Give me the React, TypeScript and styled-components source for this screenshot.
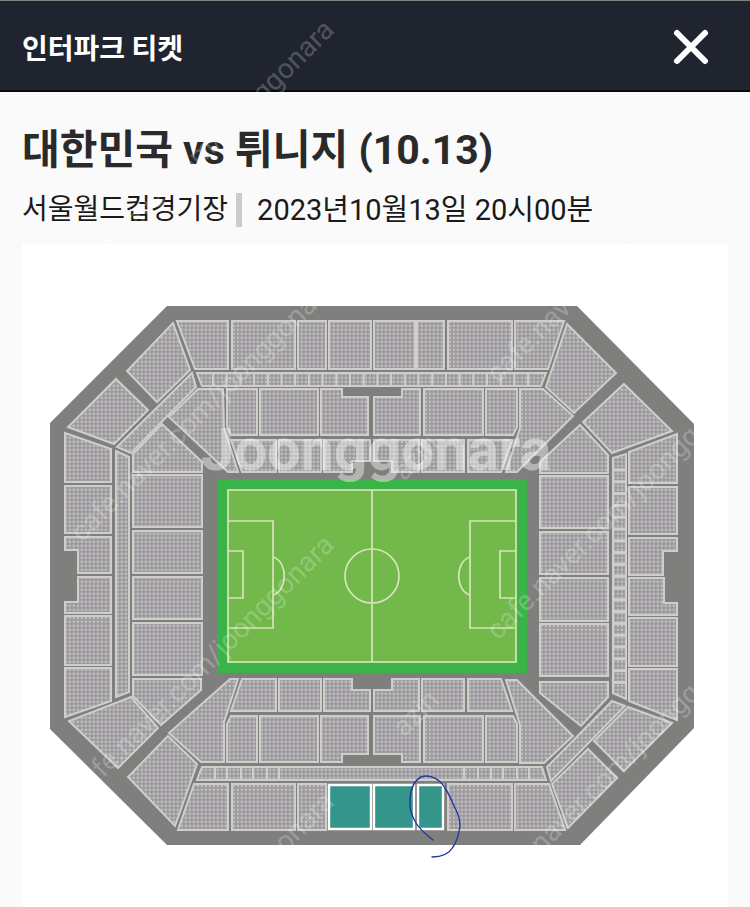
import React from 'react';
import styled, { createGlobalStyle } from 'styled-components';

const GlobalStyle = createGlobalStyle`
  * { box-sizing: border-box; }
  body {
    margin: 0;
    background: #fafafa;
    color: #222;
    font-family: Roboto, "Noto Sans CJK KR", sans-serif;
  }
`;

const Page = styled.div`
  position: relative;
  overflow: hidden;
`;

const Header = styled.header`
  display: flex;
  align-items: center;
  justify-content: space-between;
  height: 92px;
  padding: 2px 36px 0 22px;
  background: #20242f;
  border-top: 1px solid #7d857f;
  border-bottom: 2px solid #080a10;
`;

const Brand = styled.span`
  color: #fff;
  font-size: 28px;
  line-height: 40px;
  font-weight: 700;
  font-family: "Noto Sans CJK KR", sans-serif;
`;

const CloseButton = styled.button`
  display: flex;
  padding: 0;
  border: 0;
  background: none;
  cursor: pointer;
`;

const Summary = styled.section`
  padding: 30px 22px 14px;
`;

const Title = styled.h1`
  margin: 0;
  font-size: 41px;
  line-height: 56px;
  font-weight: 700;
  color: #2a2a2a;
`;

const Details = styled.p`
  display: flex;
  align-items: center;
  flex-wrap: wrap;
  margin: 12px 0 0;
  font-size: 28px;
  line-height: 40px;
  color: #1a1a1a;
`;

const Schedule = styled.time`
  font-size: 29px;
`;

const Divider = styled.span`
  width: 6px;
  height: 34px;
  margin: 0 15px 0 8px;
  background: #cbcbcb;
`;

const MapPanel = styled.main`
  margin: 0 22px;
  background: #fff;
`;

const Drawing = styled.svg`
  display: block;
  width: 100%;
  height: auto;
`;

const WatermarkLayer = styled.svg`
  position: absolute;
  top: 0;
  left: 0;
  width: 100%;
  height: auto;
  pointer-events: none;
  user-select: none;
`;

const WatermarkText = styled.text`
  font-family: Roboto, sans-serif;
  font-size: 28px;
  fill: #fff;
  fill-opacity: 0.24;
`;

const WatermarkLogo = styled.text`
  font-family: Roboto, sans-serif;
  font-size: 59px;
  font-weight: 700;
  fill: #fff;
  fill-opacity: 0.42;
`;

const rect = (x1: number, x2: number, y1: number, y2: number) =>
  `${x1},${y1} ${x2},${y1} ${x2},${y2} ${x1},${y2}`;

const blocks: string[] = [
  // north-west corner
  '173,323 190,370 157,402 127,371',
  '116,379 148,410 114,444 68,427',
  '192,373 196,387 131,453 117,447',
  '162,424 202,462 202,472 133,472 133,454',
  '198,389 223,389 224,428 238,472 228,472 169,417',
  // north stand
  '177,321 228,321 228,369 195,369',
  rect(232, 295, 321, 369),
  rect(298, 326, 321, 369),
  rect(329, 371, 321, 369),
  rect(374, 415, 321, 369),
  rect(417, 444, 321, 369),
  rect(448, 512, 321, 369),
  '515,321 564,321 548,369 515,369',
  '197,373 546,373 541,386 202,386',
  '227,389 257,389 257,435 231,435 227,426',
  rect(260, 318, 389, 435),
  '321,389 342,389 342,397 368,397 368,435 321,435',
  '374,397 402,397 402,389 420,389 420,435 374,435',
  rect(424, 483, 389, 435),
  '486,389 517,389 517,427 513,435 486,435',
  '231,440 276,440 276,472 242,472',
  rect(279, 321, 440, 472),
  '324,440 370,440 370,461 352,461 352,472 324,472',
  '374,440 419,440 419,472 392,472 392,461 374,461',
  rect(422, 464, 440, 472),
  '468,440 512,440 501,472 468,472',
  // north-east corner
  '520,389 543,389 573,416 517,472 506,472 520,428',
  '567,324 616,373 574,413 546,387',
  '624,384 672,431 612,453 583,422',
  '580,425 608,455 608,473 540,473 540,462',
  // west stand
  '65,433 111,449 111,482 65,482',
  rect(65, 111, 486, 533),
  '65,537 111,537 111,573 78,573 78,550 65,550',
  '78,577 111,577 111,613 65,613 65,602 78,602',
  rect(65, 111, 616, 665),
  '65,668 111,668 111,701 65,717',
  '116,451 129,457 129,692 116,697',
  rect(133, 202, 475, 527),
  rect(133, 202, 531, 573),
  rect(133, 202, 577, 619),
  rect(133, 202, 623, 675),
  // east stand
  '677,434 677,483 629,483 629,452',
  rect(629, 677, 487, 534),
  '629,538 677,538 677,551 663,551 663,575 629,575',
  '629,578 664,578 664,603 677,603 677,615 629,615',
  rect(629, 677, 618, 666),
  '629,669 677,669 677,720 629,701',
  '613,458 626,454 626,699 613,693',
  rect(540, 608, 476, 528),
  rect(540, 608, 532, 574),
  rect(540, 608, 578, 621),
  rect(540, 608, 624, 676),
  // south-west corner
  '133,679 201,679 201,690 161,725 133,696',
  '131,697 158,728 118,768 69,721',
  '168,736 197,764 175,826 128,777',
  '230,679 238,679 224,722 224,762 201,762 169,733',
  // south stand
  '242,679 276,679 276,711 231,711',
  rect(279, 321, 679, 711),
  '324,679 352,679 352,690 370,690 370,711 324,711',
  '374,690 392,690 392,679 419,679 419,711 374,711',
  rect(422, 464, 679, 711),
  '468,679 501,679 512,711 468,711',
  '231,716 257,716 257,762 227,762 227,724',
  rect(260, 318, 716, 762),
  '321,716 368,716 368,754 342,754 342,762 321,762',
  '374,716 420,716 420,762 402,762 402,754 374,754',
  rect(424, 483, 716, 762),
  '486,716 513,716 517,724 517,762 486,762',
  '202,767 542,767 546,780 197,780',
  '194,784 228,784 228,830 178,830',
  rect(232, 295, 784, 830),
  rect(298, 326, 784, 830),
  rect(448, 512, 784, 830),
  '515,784 549,784 565,830 515,830',
  // south-east corner
  '506,680 517,680 573,736 544,763 520,763 520,725',
  '540,682 608,682 608,697 581,726 540,693',
  '612,701 625,706 551,781 547,767',
  '628,707 672,723 624,771 594,741',
  '588,749 617,778 568,828 552,784',
];

const openBlocks = [rect(329, 371, 785, 829), rect(374, 414, 785, 829), rect(418, 443, 785, 829)];

const northTicks = Array.from({ length: 24 }, (_, i) => 213 + i * 13.7);
const eastTicks = Array.from({ length: 19 }, (_, i) => 470 + i * 11.8);
const southTicks = [215, 227, 241, 253, 267, 279, 464, 478, 491, 503, 517, 529];

function StadiumMap() {
  return (
    <Drawing viewBox="22 244 706 663" role="img" aria-label="서울월드컵경기장 좌석 배치도">
      <defs>
        <pattern id="seats" width="4" height="4" patternUnits="userSpaceOnUse">
          <rect width="4" height="4" fill="#9a989a" />
          <rect x="0.6" y="0.6" width="2.6" height="2.6" rx="0.7" fill="#bcbabc" />
        </pattern>
      </defs>
      <polygon points="167,306 577,306 694,424 694,728 580,845 167,845 50,729 50,423" fill="#7f7f7d" />
      <g fill="url(#seats)" stroke="#cfcecb" strokeWidth="2">
        {blocks.map((points) => (
          <polygon key={points} points={points} />
        ))}
      </g>
      <g stroke="#cfcecb" strokeWidth="2">
        {northTicks.map((x) => (
          <line key={x} x1={x} x2={x} y1="373" y2="386" />
        ))}
        {southTicks.map((x) => (
          <line key={x} x1={x} x2={x} y1="767" y2="780" />
        ))}
        {eastTicks.map((y) => (
          <line key={y} x1="613" x2="626" y1={y} y2={y} strokeWidth="3" />
        ))}
      </g>
      <g fill="#34968a" stroke="#fff" strokeWidth="2.4">
        {openBlocks.map((points) => (
          <polygon key={points} points={points} />
        ))}
      </g>
      <rect x="217" y="479" width="310" height="194" fill="#3bb349" />
      <g fill="none" stroke="#d5e5b5" strokeWidth="1.7">
        <rect x="228" y="490" width="288" height="172" fill="#72b84b" />
        <path d="M372 490V662M228 521H273V628H228M228 551H243V598H228M516 521H470V628H516M516 551H500V598H516" />
        <circle cx="372" cy="576" r="27" />
        <path d="M273 557C288 561 288 591 273 595M470 557C455 561 455 591 470 595" />
      </g>
      <path
        d="M433 840C427 835 420 830 416 823C411 815 409 807 410 798C411 788 415 780 421 777C429 774 439 778 445 788C449 794 451 799 454 806C458 813 460 820 460 826C459 834 457 841 453 847C449 854 441 857 432 857"
        fill="none"
        stroke="#2536a5"
        strokeWidth="1.4"
        strokeLinecap="round"
      />
    </Drawing>
  );
}

const stamps = [
  [82, 285], [82, 543], [82, 800], [82, 1057],
  [498, 384], [498, 641], [498, 898],
];

function Watermark() {
  return (
    <WatermarkLayer viewBox="0 0 750 907" aria-hidden="true">
      {stamps.map(([x, y]) => (
        <WatermarkText key={`${x}-${y}`} transform={`translate(${x} ${y}) rotate(-45)`}>
          cafe.naver.com/joonggonara
        </WatermarkText>
      ))}
      <WatermarkText transform="translate(404 482) rotate(-45)">azin</WatermarkText>
      <WatermarkText transform="translate(404 738) rotate(-45)">azin</WatermarkText>
      <WatermarkLogo x="201" y="470">Joonggonara</WatermarkLogo>
    </WatermarkLayer>
  );
}

export default function App() {
  return (
    <Page>
      <GlobalStyle />
      <Header>
        <Brand>인터파크 티켓</Brand>
        <CloseButton type="button" aria-label="닫기">
          <svg width="46" height="46" viewBox="0 0 46 46" fill="none" stroke="#fff" strokeWidth="6" strokeLinecap="round">
            <path d="M9 9L37 37M37 9L9 37" />
          </svg>
        </CloseButton>
      </Header>
      <Summary>
        <Title>대한민국 vs 튀니지 (10.13)</Title>
        <Details>
          <span>서울월드컵경기장</span>
          <Divider />
          <Schedule dateTime="2023-10-13T20:00">2023년10월13일 20시00분</Schedule>
        </Details>
      </Summary>
      <MapPanel>
        <StadiumMap />
      </MapPanel>
      <Watermark />
    </Page>
  );
}
